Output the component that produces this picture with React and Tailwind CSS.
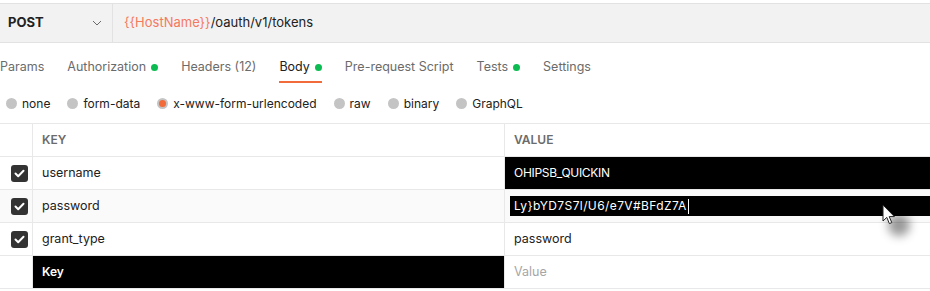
import React from 'react';

const tabs = [
  { label: 'Params' },
  { label: 'Authorization', dot: true },
  { label: 'Headers (12)' },
  { label: 'Body', dot: true, active: true },
  { label: 'Pre-request Script' },
  { label: 'Tests', dot: true },
  { label: 'Settings' },
];

const bodyTypes = ['none', 'form-data', 'x-www-form-urlencoded', 'raw', 'binary', 'GraphQL'];

function Checkbox() {
  return (
    <div className="w-[17px] h-[17px] rounded-[3px] bg-[#333333] flex items-center justify-center">
      <svg width="11" height="9" viewBox="0 0 11 9" fill="none">
        <path d="M1.5 4.5 L4.2 7.2 L9.5 1.8" stroke="white" strokeWidth="2" strokeLinecap="round" strokeLinejoin="round" />
      </svg>
    </div>
  );
}

function Row({ checked, bg = 'bg-white', keyCell, valueCell }) {
  return (
    <div className={`flex h-[33px] border-b border-[#e8e8e8] ${bg}`}>
      <div className="w-[33px] shrink-0 border-r border-[#e8e8e8] flex items-center justify-center pl-[6px]">
        {checked && <Checkbox />}
      </div>
      <div className="w-[472px] shrink-0 border-r border-[#e8e8e8] flex">{keyCell}</div>
      <div className="flex-1 flex">{valueCell}</div>
    </div>
  );
}

export default function App() {
  return (
    <div className="w-[930px] h-[291px] bg-white overflow-hidden relative text-[12px] text-[#212121]" style={{ fontFamily: 'Inter, "Noto Sans", sans-serif' }}>
      {/* URL bar */}
      <div className="mt-[3px] h-[40px] flex bg-[#f2f2f2] border-y border-[#e2e2e2]">
        <div className="w-[113px] flex items-center justify-between pl-[8px] pr-[10px] border-r border-[#e2e2e2]">
          <span className="font-bold text-[13px] text-[#212121]">POST</span>
          <svg width="10" height="6" viewBox="0 0 10 6" fill="none">
            <path d="M1 1 L5 5 L9 1" stroke="#6b6b6b" strokeWidth="1" />
          </svg>
        </div>
        <div className="flex items-center pl-[11px] text-[13px]">
          <span className="text-[#f5795e]">{'{{HostName}}'}</span>
          <span className="text-[#212121]">/oauth/v1/tokens</span>
        </div>
      </div>

      {/* Tabs */}
      <div className="flex h-[40px] gap-[23px]">
        {tabs.map((t) => (
          <div key={t.label} className="flex flex-col">
            <div className="flex items-center h-[18px] mt-[15px] gap-[5px] text-[12.5px]">
              <span className={t.active ? 'text-[#212121]' : 'text-[#6b6b6b]'}>{t.label}</span>
              {t.dot && <span className="w-[7px] h-[7px] rounded-full bg-[#0cbb52]" />}
            </div>
            <div className={`mt-auto h-[2px] ${t.active ? 'bg-[#f26b3a]' : ''}`} />
          </div>
        ))}
      </div>

      {/* Body types */}
      <div className="flex items-center h-[40px] pt-[1px] pl-[6px] gap-[17px]">
        {bodyTypes.map((b) => (
          <div key={b} className="flex items-center gap-[5px]">
            <span className="w-[11px] h-[11px] rounded-full bg-[#c4c4c4] flex items-center justify-center">
              {b === 'x-www-form-urlencoded' && <span className="w-[7px] h-[7px] rounded-full bg-[#f26b3a]" />}
            </span>
            <span className="text-[#212121] text-[12px]">{b}</span>
          </div>
        ))}
      </div>

      {/* Table */}
      <div className="border-t border-[#e8e8e8]">
        <div className="flex h-[33px] border-b border-[#e8e8e8]">
          <div className="w-[33px] shrink-0 border-r border-[#e8e8e8]" />
          <div className="w-[472px] shrink-0 border-r border-[#e8e8e8] flex items-center pl-[9px] text-[12px] font-semibold text-[#6b6b6b]">KEY</div>
          <div className="flex-1 flex items-center pl-[9px] text-[12px] font-semibold text-[#6b6b6b]">VALUE</div>
        </div>

        <Row
          checked
          keyCell={<span className="self-center pl-[9px] text-[#212121] text-[12.5px]">username</span>}
          valueCell={
            <div className="flex-1 bg-black flex items-center pl-[9px] text-white text-[12px] tracking-[-0.3px]">OHIPSB_QUICKIN</div>
          }
        />
        <Row
          checked
          bg="bg-[#fafafa]"
          keyCell={<span className="self-center pl-[9px] text-[#212121] text-[12.5px]">password</span>}
          valueCell={
            <div className="flex-1 flex items-center pl-[5px]">
              <div className="flex-1 h-[20px] bg-black flex items-center pl-[4px] text-white text-[12px] tracking-[0.4px]">
                <span>Ly}bYD7S7l/U6/e7V#BFdZ7A</span>
                <span className="w-px h-[15px] bg-white ml-[1px]" />
              </div>
            </div>
          }
        />
        <Row
          checked
          keyCell={<span className="self-center pl-[9px] text-[#212121] text-[12.5px]">grant_type</span>}
          valueCell={<span className="self-center pl-[9px] text-[#212121] text-[12.5px]">password</span>}
        />
        <Row
          keyCell={<div className="flex-1 bg-black flex items-center pl-[9px] text-white font-semibold text-[12px]">Key</div>}
          valueCell={<span className="self-center pl-[9px] text-[#a6a6a6] text-[12.5px]">Value</span>}
        />
      </div>

      {/* mouse pointer */}
      <div className="absolute left-[882px] top-[204px] pointer-events-none">
        <div className="absolute left-[6px] top-[10px] w-[22px] h-[22px] rounded-full bg-black/40 blur-[5px]" />
        <svg className="relative" width="14" height="22" viewBox="0 0 14 22">
          <path d="M1 1 L1 17 L4.8 13.4 L7.4 19.6 L9.8 18.6 L7.2 12.6 L12.4 12.6 Z" fill="white" stroke="#222" strokeWidth="1" strokeLinejoin="round" />
        </svg>
      </div>
    </div>
  );
}
